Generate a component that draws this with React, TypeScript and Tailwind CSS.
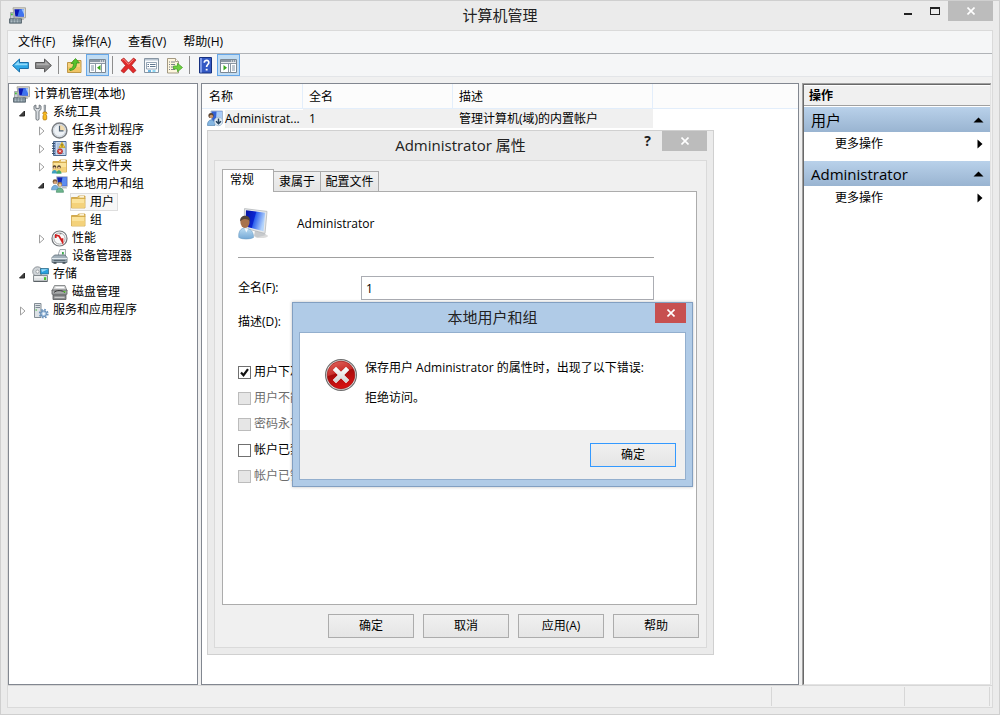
import type { ReactNode } from "react";

/* ---------- icons ---------- */

function ComputerIcon({ size = 17 }: { size?: number }) {
  return (
    <svg width={size} height={size} viewBox="0 0 17 17" aria-hidden="true" className="shrink-0">
      <path d="M4 .8h12.500v10H5.500z" fill="#d9d8cf" stroke="#a3a299" strokeWidth=".9" />
      <path d="M5.400 2.200h9.600v7.200H6.400z" fill="#0a18b4" />
      <path d="M10.500 2.200H15v7.200H8.500z" fill="#3f73ee" />
      <path d="M12.500 2.200H15v5z" fill="#9dc4fb" />
      <path d="M1.500 5.500h3.300v6.500H1.500z" fill="#c9ced3" stroke="#8a9197" strokeWidth=".7" />
      <rect x="2" y="6.500" width="1.800" height="1.800" fill="#4cc13c" />
      <path d="M9 10.800h5.500l.5 2.200h-4z" fill="#bcbcb4" />
      <path d="M.5 11.800h12v4.400H.5z" fill="#6b7c86" stroke="#44535c" strokeWidth=".7" />
      <path d="M1.500 13h10M1.500 14.800h10" stroke="#d5e0e6" strokeWidth=".9" strokeDasharray="2 1" />
    </svg>
  );
}

function ToolsIcon() {
  return (
    <svg width="17" height="17" viewBox="0 0 17 17" aria-hidden="true" className="shrink-0">
      <path d="M2 2v3.500L4 7.200V15c0 1.600 3 1.600 3 0V7.200l2-1.700V2L7.200 1v3.400H3.900V1z" fill="#d8dce0" stroke="#646b72" strokeWidth=".9" />
      <path d="M12 1.200h1.600l-.3 7h-1z" fill="#b9bfc5" stroke="#737a80" strokeWidth=".7" />
      <path d="M11.400 8h2.900l.6 1.500-1 1.200.8 1.200v3.300c0 1-3.700 1-3.700 0v-3.300l.8-1.200-1-1.200z" fill="#f9bd22" stroke="#b57a0c" strokeWidth=".8" />
    </svg>
  );
}

function ClockIcon() {
  return (
    <svg width="17" height="17" viewBox="0 0 17 17" aria-hidden="true" className="shrink-0">
      <circle cx="8.500" cy="8.500" r="7.400" fill="#eef2f6" stroke="#7b7f84" strokeWidth="1.500" />
      <path d="M8.500 8.500V2.600A6 6 0 0 1 14.400 8.500z" fill="#f3dcae" />
      <circle cx="8.500" cy="8.500" r="5.900" fill="none" stroke="#c3ccd6" strokeWidth=".8" />
      <path d="M8.500 3.800v5h4" fill="none" stroke="#4f6274" strokeWidth="1.200" />
    </svg>
  );
}

function EventIcon() {
  return (
    <svg width="17" height="17" viewBox="0 0 17 17" aria-hidden="true" className="shrink-0">
      <path d="M2.500 1.500h12.500v14H2.500z" fill="#8aa5cd" stroke="#4c6a92" />
      <path d="M5 2h9.500v13H5z" fill="#c9d9ee" />
      <path d="M6 4h3M6 6h2M6 8h2M6 13.500h7" stroke="#8ea9cc" />
      <path d="M1 3.500h3M1 6h3M1 8.500h3M1 11h3M1 13.500h3" stroke="#39506d" strokeWidth="1.100" />
      <path d="m11 2.200 3 5.400H8z" fill="#ffd42a" stroke="#b58900" strokeWidth=".6" />
      <path d="M11 4v1.900M11 6.300v.8" stroke="#333" strokeWidth=".9" />
      <circle cx="9" cy="11.300" r="2.600" fill="#d93a35" stroke="#8e1713" strokeWidth=".5" />
      <path d="m8 10.300 2 2m0-2-2 2" stroke="#fff" strokeWidth=".9" />
    </svg>
  );
}

function FolderShape() {
  return (
    <>
      <path d="M1.500 3.500h6l1-1.500h6.500v3H1.500z" fill="#e9c76a" stroke="#c79a37" strokeWidth=".8" />
      <path d="M9.500 2.800h4.500" stroke="#fff" strokeWidth="1.200" />
      <path d="M1.500 4.500h13.500v9.500H1.500z" fill="#fbe39b" stroke="#d0a648" strokeWidth=".8" />
      <path d="M2 9h12.500v4.600H2z" fill="#f4d27b" />
    </>
  );
}

function FolderIcon() {
  return (
    <svg width="16" height="16" viewBox="0 0 16 16" aria-hidden="true" className="shrink-0">
      <FolderShape />
    </svg>
  );
}

function SharedIcon() {
  return (
    <svg width="17" height="17" viewBox="0 0 17 17" aria-hidden="true" className="shrink-0">
      <g transform="translate(.5 0)">
        <FolderShape />
      </g>
      <circle cx="3.500" cy="9" r="1.800" fill="#4a3a2a" />
      <circle cx="3.500" cy="9.900" r="1.100" fill="#eec49a" />
      <path d="M.8 15.500c0-4.800 5.400-4.800 5.400 0z" fill="#3d9fc0" />
      <circle cx="8" cy="9" r="1.800" fill="#4a3a2a" />
      <circle cx="8" cy="9.900" r="1.100" fill="#eec49a" />
      <path d="M5.500 15.800c0-4.800 5-4.800 5 0z" fill="#43a970" />
    </svg>
  );
}

function UsersIcon() {
  return (
    <svg width="17" height="17" viewBox="0 0 17 17" aria-hidden="true" className="shrink-0">
      <path d="M5.500 .8h10.800v9.500H7z" fill="#1224b0" stroke="#b9bfc9" strokeWidth="1" />
      <path d="M11.500 1.300h4.300v8.500H10z" fill="#5c8cf0" />
      <path d="M11 10.800h4.500l.5 1.800h-5z" fill="#b9bdc2" />
      <circle cx="4" cy="5.700" r="2.400" fill="#7b5a3b" />
      <circle cx="4.200" cy="6.600" r="1.600" fill="#d8a67a" />
      <path d="M.5 13.800c0-6 7-6 7 0z" fill="#79b0dd" stroke="#4c83b4" strokeWidth=".6" />
      <circle cx="8.800" cy="8.300" r="2.300" fill="#a37b3e" />
      <circle cx="9" cy="9.100" r="1.500" fill="#f0cba0" />
      <path d="M5.300 16.300c0-6 7.200-6 7.200 0z" fill="#6db58d" stroke="#3d8560" strokeWidth=".6" />
    </svg>
  );
}

function PerfIcon() {
  return (
    <svg width="17" height="17" viewBox="0 0 17 17" aria-hidden="true" className="shrink-0">
      <circle cx="8.500" cy="8.500" r="7.500" fill="#fff" stroke="#74787c" strokeWidth="1.200" />
      <circle cx="8.500" cy="8.500" r="5.600" fill="#fafafa" stroke="#9b9fa2" strokeWidth=".9" />
      <path d="M4.800 8V5.200l3.200.8 3.500 6V8.200" fill="none" stroke="#d21f1f" strokeWidth="1.700" />
      <path d="M8.500 3.800h2" stroke="#555" strokeWidth=".8" />
    </svg>
  );
}

function DeviceIcon() {
  return (
    <svg width="17" height="17" viewBox="0 0 17 17" aria-hidden="true" className="shrink-0">
      <path d="M7.500 5.500 9 1.500h5.500V9h-7z" fill="#f4f6f8" stroke="#8b959d" strokeWidth=".8" />
      <path d="M11 4h1.800v2.500H11z" fill="#3bab4b" />
      <path d="M1 9.500 3.500 7h10.500l2 2.500v5H1z" fill="#a3b1bb" stroke="#5f6f7a" strokeWidth=".8" />
      <path d="M1 10.500h15" stroke="#e2e9ee" />
      <path d="M2.500 12.500h12" stroke="#586872" strokeWidth="1.400" />
      <path d="M2.500 15h3M11.500 15h3" stroke="#39444b" strokeWidth="1.400" />
    </svg>
  );
}

function StorageIcon() {
  return (
    <svg width="17" height="17" viewBox="0 0 17 17" aria-hidden="true" className="shrink-0">
      <circle cx="5.500" cy="5.600" r="4.800" fill="#cfd4d8" stroke="#7c8388" strokeWidth=".8" />
      <circle cx="5.500" cy="5.600" r="1.600" fill="#f8f8f8" stroke="#8f959a" strokeWidth=".8" />
      <path d="M8.500 2.500h8v5.500h-8z" fill="#29a0de" stroke="#22617f" strokeWidth=".7" />
      <path d="M9.200 3.200h6.600L10 6z" fill="#9bdcfa" />
      <path d="M1.500 9.500h14v5.600h-14z" fill="#e0e3e5" stroke="#6f767b" strokeWidth=".8" />
      <path d="M2.500 11h8.500" stroke="#fff" />
      <path d="M12 11.200h2.200V14H12z" fill="#49c22e" />
      <path d="M1.500 15.500h14" stroke="#5b6267" />
    </svg>
  );
}

function DiskIcon() {
  return (
    <svg width="17" height="17" viewBox="0 0 17 17" aria-hidden="true" className="shrink-0">
      <path d="M3.500 1.500h10.500l2 5.500H1z" fill="#d4d5d6" stroke="#75787a" strokeWidth=".8" />
      <path d="M4.500 3.500h8.500" stroke="#fff" strokeWidth="1.200" />
      <path d="M1 6h15v4.300H1z" fill="#a7a9aa" stroke="#56595b" strokeWidth=".8" />
      <path d="M3 8.500c2-2.500 8-2.500 11 0" fill="none" stroke="#333" />
      <path d="M12.500 7h2v1.400h-2z" fill="#57cf30" />
      <path d="M2 11h13v4.500H2z" fill="#8a8c8e" stroke="#56595b" strokeWidth=".8" />
      <path d="M3.500 13.300h10" stroke="#d8d8d8" />
    </svg>
  );
}

function ServicesIcon() {
  return (
    <svg width="17" height="17" viewBox="0 0 17 17" aria-hidden="true" className="shrink-0">
      <path d="M2.500 1.500h6.500v14H2.500z" fill="#dde2e6" stroke="#77818a" strokeWidth=".9" />
      <path d="M3.500 3.500h4.500M3.500 5.500h4.500" stroke="#7f8b95" />
      <path d="M3.500 8h1.500" stroke="#3cb52c" strokeWidth="1.200" />
      <circle cx="11.700" cy="11.700" r="4" fill="none" stroke="#6b93bd" strokeWidth="1.800" strokeDasharray="1.700 1.440" />
      <circle cx="11.700" cy="11.700" r="2.900" fill="#a9c6e3" stroke="#5f88b3" />
      <circle cx="11.700" cy="11.700" r="1.200" fill="#f5f8fb" />
    </svg>
  );
}

function UserMonitorIcon() {
  return (
    <svg width="32" height="32" viewBox="0 0 32 32" aria-hidden="true" className="shrink-0">
      <defs>
        <linearGradient id="screenFill" x1="0" y1="0" x2="1" y2="0.300">
          <stop offset="0" stopColor="#0612a0" />
          <stop offset=".5" stopColor="#0b25d2" />
          <stop offset=".55" stopColor="#2f62ee" />
          <stop offset="1" stopColor="#b4d4fb" />
        </linearGradient>
        <linearGradient id="shirtFill" x1="0" y1="0" x2="0" y2="1">
          <stop offset="0" stopColor="#bcdcf2" />
          <stop offset="1" stopColor="#74a9d6" />
        </linearGradient>
      </defs>
      <ellipse cx="23" cy="28" rx="7" ry="2" fill="#dcdcdc" />
      <path d="M17 22.500 25 24l3 3-9 2.500-3-2z" fill="#c6c9cc" />
      <path d="m6.500.6 22.500 2.800L27 25.500 6 20z" fill="#e6e8ea" stroke="#b4b7ba" strokeWidth=".8" />
      <path d="m8 2.200 19.200 2.500-1.700 18.500L7.500 18.500z" fill="url(#screenFill)" />
      <path d="M.8 29.500C.2 23 3 20.500 6 20c4 0 9.800 1.500 9.500 9.500-3.500 2-11.200 2-14.700 0z" fill="url(#shirtFill)" stroke="#6f9dc4" strokeWidth=".6" />
      <path d="m6.300 20 2 4.500 2-4z" fill="#f3f8fc" />
      <ellipse cx="7" cy="14" rx="4.600" ry="6" fill="#a8734c" />
      <path d="M2.200 13.500C1 6.500 12.500 5.500 12 13c-1.500-1.500-3.500-2.200-5.500-2-1.800.3-2.800 1.200-4.300 2.500z" fill="#54463a" />
    </svg>
  );
}

function UserDisabledIcon() {
  return (
    <svg width="17" height="17" viewBox="0 0 17 17" aria-hidden="true" className="shrink-0">
      <path d="M4 1h11.500v12H5z" fill="#3461d4" stroke="#a4b6cf" />
      <path d="M9.500 1.500H15v9.500H9z" fill="#a9cbf7" />
      <circle cx="4" cy="5.500" r="2.600" fill="#5a4332" />
      <circle cx="4.300" cy="6.500" r="1.800" fill="#c9966b" />
      <path d="M.5 15.500c-.5-7.500 8-7.500 7.500 0z" fill="#84b6e2" stroke="#5788b5" strokeWidth=".7" />
      <circle cx="11.500" cy="11.500" r="4.200" fill="#e2edf6" stroke="#9fb9d0" strokeWidth=".8" />
      <path d="M11.500 8.500v5M9 11.300l2.500 2.500 2.500-2.500" fill="none" stroke="#24425f" strokeWidth="1.500" />
    </svg>
  );
}

function ArrowIcon({ direction }: { direction: "left" | "right" }) {
  const left = direction === "left";
  return (
    <svg width="17" height="17" viewBox="0 0 17 17" aria-hidden="true">
      <g transform={left ? undefined : "translate(17 0) scale(-1 1)"}>
        <path d="M.6 8.500 7.500 2v3.500h8.900v6H7.500V15z" fill={left ? "#2fa7e6" : "#868686"} stroke={left ? "#1a6fa9" : "#5a5a5a"} strokeLinejoin="round" />
        <path d="M2.200 8.200 6.800 4v2.500h8.600v1.700z" fill={left ? "#8fdafa" : "#adadad"} />
      </g>
    </svg>
  );
}

function UpFolderIcon() {
  return (
    <svg width="17" height="17" viewBox="0 0 17 17" aria-hidden="true">
      <path d="M1.500 5.500h5l1-2h7.500v12H1.500z" fill="#f6d27a" stroke="#b98d3a" strokeWidth=".9" />
      <path d="M2 10h12.500v5H2z" fill="#efc465" />
      <path d="M3.500 12c3-.5 4-2.500 4-5.500H5L9.500 1.500l4 4.500h-3c0 4.500-2 7-6.500 7.500z" fill="#57c32c" stroke="#2f8a15" strokeWidth=".7" />
    </svg>
  );
}

function PaneIcon({ side }: { side: "left" | "right" }) {
  return (
    <svg width="17" height="15" viewBox="0 0 17 15" aria-hidden="true">
      <path d="M.5 1.500h16v13H.5z" fill="#fff" stroke="#7b8792" />
      <path d="M1 2h15v2.200H1z" fill="#8b98a4" />
      <path d="M11 3h1M13 3h1M15 3h1" stroke="#fff" />
      <path d="M1 5.500h15" stroke="#8b98a4" />
      {side === "left" ? (
        <>
          <path d="M6.500 5v9.500M12.500 5v9.500" stroke="#8b98a4" />
          <path d="M2 8h3M2 10h3M2 12h3" stroke="#8093a4" />
          <path d="M11.500 7v5.500L8 9.800z" fill="#38a81d" />
        </>
      ) : (
        <>
          <path d="M8.500 5v9.500M10.500 5v9.500" stroke="#8b98a4" />
          <path d="M12 8h3M12 10h3M12 12h3" stroke="#8093a4" />
          <path d="M3.500 7v5.500L7 9.800z" fill="#38a81d" />
        </>
      )}
    </svg>
  );
}

function DeleteIcon() {
  return (
    <svg width="17" height="17" viewBox="0 0 17 17" aria-hidden="true">
      <path d="m1 3 2.800-2 4.700 5L13.500 1 16 3l-4.500 5.300L16 13.500 13.200 16 8.500 11 3.800 16 1 13.800 5.600 8.500z" fill="#e22b2b" stroke="#a81616" strokeWidth=".7" strokeLinejoin="round" />
      <path d="m2.500 3 1.200-.8L8.500 7.300 13.500 2.300" fill="none" stroke="#f68f87" />
    </svg>
  );
}

function PropertiesIcon() {
  return (
    <svg width="15" height="17" viewBox="0 0 15 17" aria-hidden="true">
      <path d="M.5 1.500h14v14H.5z" fill="#fbfcfd" stroke="#8795a3" />
      <path d="M1 2h13v1.500H1z" fill="#b9c6d2" />
      <path d="M2.500 5.500h10v6.500h-10z" fill="#fff" stroke="#7c90a5" strokeWidth=".8" />
      <path d="M3.500 7.500h1.500M6 7.500h5.500M3.500 9.500h1.500M6 9.500h5.500" stroke="#60778f" />
      <path d="M4 14h3" stroke="#1c8fd6" strokeWidth="1.300" />
      <path d="M8.500 14h3" stroke="#53c3ee" strokeWidth="1.300" />
    </svg>
  );
}

function ExportIcon() {
  return (
    <svg width="17" height="17" viewBox="0 0 17 17" aria-hidden="true">
      <path d="M1.500 1.500h8l3 3v11.500h-11z" fill="#fdf6de" stroke="#998f76" strokeWidth=".9" />
      <path d="M9.500 1.500v3h3" fill="#fff" stroke="#998f76" strokeWidth=".8" />
      <path d="M3 5h1M5 5h4M3 7.500h1M5 7.500h4M3 10h1M5 10h2M3 12.500h1M5 12.500h4" stroke="#6d7580" strokeWidth=".9" />
      <path d="M7.500 9h4V6.300L16.500 10.500 11.500 14.700V12h-4z" fill="#6fd142" stroke="#4aa52c" strokeWidth=".8" />
    </svg>
  );
}

function HelpIcon() {
  return (
    <svg width="13" height="17" viewBox="0 0 13 17" aria-hidden="true">
      <path d="M.5.5h12v15.500H.5z" fill="#3459c4" stroke="#16307f" />
      <path d="M1 1h2v14.500H1z" fill="#7e9ae6" />
      <path d="M5.300 5.700c0-3.400 5-3 4.500.1-.3 1.700-2.200 2-2.200 4.200" fill="none" stroke="#fff" strokeWidth="1.700" />
      <path d="M6.700 11.800h1.900v1.700H6.700z" fill="#fff" />
    </svg>
  );
}

function ErrorIcon() {
  return (
    <svg width="32" height="32" viewBox="0 0 32 32" aria-hidden="true" className="shrink-0">
      <defs>
        <linearGradient id="errorFill" x1="0" y1="0" x2="0.300" y2="1">
          <stop offset="0" stopColor="#e2675f" />
          <stop offset=".48" stopColor="#c9302c" />
          <stop offset=".52" stopColor="#a80c0c" />
          <stop offset="1" stopColor="#d41212" />
        </linearGradient>
        <linearGradient id="crossFill" x1="0" y1="0" x2="0" y2="1">
          <stop offset="0" stopColor="#ffffff" />
          <stop offset="1" stopColor="#cfcfcf" />
        </linearGradient>
      </defs>
      <circle cx="16" cy="16" r="15.400" fill="#f2f2f2" stroke="#6d6d6d" strokeWidth="1.200" />
      <circle cx="16" cy="16" r="13.900" fill="url(#errorFill)" stroke="#8e1010" strokeWidth=".6" />
      <path d="m8 11 3-3 5 5 5-5 3 3-5 5 5 5-3 3-5-5-5 5-3-3 5-5z" fill="url(#crossFill)" stroke="#ececec" strokeWidth=".6" strokeLinejoin="round" />
    </svg>
  );
}

function CloseGlyph() {
  return (
    <svg width="8" height="8" viewBox="0 0 8 8" aria-hidden="true">
      <path d="m.5.5 7 7m0-7-7 7" stroke="#fff" strokeWidth="1.600" />
    </svg>
  );
}

/* ---------- navigation tree ---------- */

type NodeProps = {
  icon: ReactNode;
  label: string;
  state?: "open" | "closed";
  selected?: boolean;
  children?: ReactNode;
};

function Twisty({ state }: { state?: "open" | "closed" }) {
  return (
    <svg width="19" height="17" viewBox="0 0 19 17" aria-hidden="true" className="shrink-0">
      {state === "open" && <path d="M11.500 7v5h-5z" fill="#404040" stroke="#262626" />}
      {state === "closed" && <path d="M7.500 5v8l4.500-4z" fill="#fff" stroke="#a0a0a0" />}
    </svg>
  );
}

function TreeNode({ icon, label, state, selected, children }: NodeProps) {
  return (
    <li role="treeitem" aria-expanded={state ? state === "open" : undefined} aria-selected={!!selected}>
      <div className="flex h-[18px] items-center">
        <Twisty state={state} />
        <span
          className={
            selected
              ? "flex h-[18px] items-center gap-1 bg-[#f7f7f7] pr-1 outline outline-1 -outline-offset-1 outline-[#dedede]"
              : "flex h-[18px] items-center gap-1 pr-1"
          }
        >
          {icon}
          <span className="whitespace-nowrap">{label}</span>
        </span>
      </div>
      {children && (
        <ul role="group" className="pl-[19px]">
          {children}
        </ul>
      )}
    </li>
  );
}

function NavigationTree() {
  return (
    <nav className="w-[190px] shrink-0 overflow-hidden border border-[#828790] bg-white pt-px pl-1" aria-label="控制台树">
      <div className="flex h-[18px] items-center gap-1">
        <ComputerIcon />
        <span>计算机管理(本地)</span>
      </div>
      <ul role="tree">
        <TreeNode icon={<ToolsIcon />} label="系统工具" state="open">
          <TreeNode icon={<ClockIcon />} label="任务计划程序" state="closed" />
          <TreeNode icon={<EventIcon />} label="事件查看器" state="closed" />
          <TreeNode icon={<SharedIcon />} label="共享文件夹" state="closed" />
          <TreeNode icon={<UsersIcon />} label="本地用户和组" state="open">
            <TreeNode icon={<FolderIcon />} label="用户" selected />
            <TreeNode icon={<FolderIcon />} label="组" />
          </TreeNode>
          <TreeNode icon={<PerfIcon />} label="性能" state="closed" />
          <TreeNode icon={<DeviceIcon />} label="设备管理器" />
        </TreeNode>
        <TreeNode icon={<StorageIcon />} label="存储" state="open">
          <TreeNode icon={<DiskIcon />} label="磁盘管理" />
        </TreeNode>
        <TreeNode icon={<ServicesIcon />} label="服务和应用程序" state="closed" />
      </ul>
    </nav>
  );
}

/* ---------- menu and tool bars ---------- */

const menus = ["文件(F)", "操作(A)", "查看(V)", "帮助(H)"];

function ToolButton({ label, active, children }: { label: string; active?: boolean; children: ReactNode }) {
  return (
    <button
      type="button"
      aria-label={label}
      aria-pressed={active}
      className={
        active
          ? "flex h-[22px] w-[23px] items-center justify-center border border-[#66a7e8] bg-[#c0dcf3]"
          : "flex h-[22px] w-[23px] items-center justify-center"
      }
    >
      {children}
    </button>
  );
}

function Separator() {
  return (
    <span className="flex w-2 pl-[3px]">
      <span className="h-[18px] w-px bg-[#8d8d8d]" />
    </span>
  );
}

function ToolBar() {
  return (
    <div role="toolbar" className="flex h-[23px] items-center border-b border-[#e3e5e8] bg-[#f5f6f7] pl-px">
      <ToolButton label="后退"><ArrowIcon direction="left" /></ToolButton>
      <ToolButton label="前进"><ArrowIcon direction="right" /></ToolButton>
      <Separator />
      <ToolButton label="向上"><UpFolderIcon /></ToolButton>
      <ToolButton label="显示控制台树" active><PaneIcon side="left" /></ToolButton>
      <Separator />
      <ToolButton label="删除"><DeleteIcon /></ToolButton>
      <ToolButton label="属性"><PropertiesIcon /></ToolButton>
      <ToolButton label="导出列表"><ExportIcon /></ToolButton>
      <Separator />
      <ToolButton label="帮助"><HelpIcon /></ToolButton>
      <ToolButton label="显示操作窗格" active><PaneIcon side="right" /></ToolButton>
    </div>
  );
}

/* ---------- user list ---------- */

function UserList() {
  return (
    <section className="min-w-0 flex-1 overflow-hidden border border-[#828790] bg-white">
      <table className="w-full table-fixed border-separate border-spacing-0 text-left">
        <colgroup>
          <col className="w-[101px]" />
          <col className="w-[150px]" />
          <col className="w-[200px]" />
          <col />
        </colgroup>
        <thead className="bg-[#fcfcfc]">
          <tr className="h-[25px]">
            <th className="border-r border-b border-[#e3eefb] pt-px pl-[7px] font-normal">名称</th>
            <th className="border-r border-b border-[#e3eefb] pt-px pl-[6px] font-normal">全名</th>
            <th className="border-r border-b border-[#e3eefb] pt-px pl-[6px] font-normal">描述</th>
            <td className="border-b border-[#e3eefb]" />
          </tr>
        </thead>
        <tbody>
          <tr className="h-[19px]">
            <td className="pl-[5px]">
              <span className="flex items-center gap-px whitespace-nowrap">
                <UserDisabledIcon />
                <span className="flex-1 bg-[#f0f0f0]">Administrat...</span>
              </span>
            </td>
            <td className="bg-[#f0f0f0] pl-[6px]">1</td>
            <td className="bg-[#f0f0f0] pl-[6px]">管理计算机(域)的内置帐户</td>
            <td />
          </tr>
        </tbody>
      </table>
    </section>
  );
}

/* ---------- actions pane ---------- */

function ActionGroup({ title }: { title: string }) {
  return (
    <section className="pb-[5px]">
      <button type="button" className="flex h-[25px] w-full items-center justify-between bg-linear-to-b from-[#b9d1ea] to-[#99b4d1] pr-[6px] pl-[7px] text-[15px]">
        {title}
        <svg width="11" height="6" viewBox="0 0 11 6" aria-hidden="true">
          <path d="M5.500.5 10.500 5.500H.5z" />
        </svg>
      </button>
      <button type="button" className="flex h-6 w-full items-center justify-between pr-[7px] pl-[31px]">
        更多操作
        <svg width="6" height="10" viewBox="0 0 6 10" aria-hidden="true">
          <path d="M.5.500 5.500 5 .5 9.500z" />
        </svg>
      </button>
    </section>
  );
}

function ActionsPane() {
  return (
    <aside className="mr-px w-[189px] shrink-0 border-t border-l border-[#a0a0a0]">
      <div className="h-full border-t border-r border-b border-l border-t-[#696969] border-r-[#e3e3e3] border-b-[#e3e3e3] border-l-[#696969] bg-white">
        <h2 className="mt-px mb-px h-5 border-b border-[#a0a0a0] bg-[#f0f0f0] pl-[5px] leading-5 font-bold">操作</h2>
        <ActionGroup title="用户" />
        <ActionGroup title="Administrator" />
      </div>
    </aside>
  );
}

/* ---------- dialogs ---------- */

function DialogButton({ children, primary }: { children: ReactNode; primary?: boolean }) {
  return (
    <button
      type="button"
      className={
        primary
          ? "h-6 w-[86px] border border-[#3399ff] bg-linear-to-b from-[#f0f0f0] to-[#e5e5e5]"
          : "h-6 w-[86px] border border-[#acacac] bg-linear-to-b from-[#f0f0f0] to-[#e5e5e5]"
      }
    >
      {children}
    </button>
  );
}

const options = [
  { id: "must-change", label: "用户下次登录", checked: true, disabled: false },
  { id: "cannot-change", label: "用户不能更改", checked: false, disabled: true },
  { id: "never-expires", label: "密码永不过期", checked: false, disabled: true },
  { id: "account-disabled", label: "帐户已禁用", checked: false, disabled: false },
  { id: "account-locked", label: "帐户已锁定", checked: false, disabled: true },
];

function CheckOption({ id, label, checked, disabled }: (typeof options)[number]) {
  return (
    <div className="flex h-[26px] items-center gap-[3px]">
      <span className="grid size-[13px] place-items-center">
        <input
          id={id}
          type="checkbox"
          defaultChecked={checked}
          disabled={disabled}
          className="peer col-start-1 row-start-1 size-[13px] appearance-none border border-[#707070] bg-white disabled:border-[#bcbcbc] disabled:bg-[#e6e6e6]"
        />
        <svg width="9" height="9" viewBox="0 0 9 9" aria-hidden="true" className="pointer-events-none invisible col-start-1 row-start-1 peer-checked:visible">
          <path d="M1 4.500 3.500 7.200 8 1.200" fill="none" stroke="#111" strokeWidth="2.200" />
        </svg>
      </span>
      <label htmlFor={id} className={disabled ? "text-[#6d6d6d]" : "text-black"}>
        {label}
      </label>
    </div>
  );
}

function PropertiesDialog() {
  return (
    <section role="dialog" aria-labelledby="properties-title" className="absolute top-[129px] left-[206px] flex w-[507px] flex-col border border-[#d0d0d0] bg-[#ebebeb] px-[6px] pb-[6px]">
      <header className="grid h-[29px] grid-cols-[1fr_auto_1fr] items-start">
        <span />
        <h2 id="properties-title" className="text-[15px] leading-[29px] text-[#222]">Administrator 属性</h2>
        <div className="flex justify-end">
          <button type="button" aria-label="帮助" className="h-5 w-[29px] text-[14px] leading-5 font-bold text-[#222]">?</button>
          <button type="button" aria-label="关闭" className="flex h-5 w-[45px] items-center justify-center bg-[#bcbcbc]">
            <CloseGlyph />
          </button>
        </div>
      </header>
      <div className="border border-[#dadada] bg-[#f0f0f0] px-[7px] pt-2 pb-[9px]">
        <div role="tablist" className="flex items-end">
          <button type="button" role="tab" aria-selected="true" className="relative z-10 -mb-px h-[23px] w-[52px] border border-b-0 border-[#acacac] bg-white pr-3 pb-[2px]">常规</button>
          <button type="button" role="tab" aria-selected="false" className="h-5 w-[47px] border border-b-0 border-l-0 border-[#acacac] bg-linear-to-b from-[#f0f0f0] to-[#e5e5e5]">隶属于</button>
          <button type="button" role="tab" aria-selected="false" className="h-5 w-[58px] border border-b-0 border-l-0 border-[#acacac] bg-linear-to-b from-[#f0f0f0] to-[#e5e5e5]">配置文件</button>
        </div>
        <div role="tabpanel" className="mr-[2px] h-[414px] border border-[#acacac] bg-white pt-3 pr-[42px] pl-[15px]">
          <div className="flex items-center gap-[27px] border-b border-[#a0a0a0] pt-[2px] pb-[15px]">
            <UserMonitorIcon />
            <span className="h-9 leading-9">Administrator</span>
          </div>
          <div className="mt-[18px] grid grid-cols-[123px_1fr] items-center gap-y-[10px]">
            <label htmlFor="full-name">全名(F):</label>
            <input id="full-name" defaultValue="1" className="h-6 w-full border border-[#abadb3] bg-white px-1" />
            <label htmlFor="description">描述(D):</label>
            <input id="description" className="h-6 w-full border border-[#abadb3] bg-white px-1" />
          </div>
          <div className="mt-[25px]">
            {options.map((option) => (
              <CheckOption key={option.id} {...option} />
            ))}
          </div>
        </div>
        <footer className="mt-[9px] flex justify-end gap-[9px]">
          <DialogButton>确定</DialogButton>
          <DialogButton>取消</DialogButton>
          <DialogButton>应用(A)</DialogButton>
          <DialogButton>帮助</DialogButton>
        </footer>
      </div>
    </section>
  );
}

function ErrorDialog() {
  return (
    <section role="alertdialog" aria-labelledby="error-title" className="absolute top-[301px] left-[291px] flex w-[401px] flex-col border border-[#829fc1] bg-[#b0cbe7] px-[6px] pb-[6px] shadow-[0_0_3px_rgba(0,0,0,0.25)]">
      <header className="grid h-[29px] grid-cols-[1fr_auto_1fr] items-start">
        <span />
        <h2 id="error-title" className="text-[15px] leading-[29px] text-[#222]">本地用户和组</h2>
        <button type="button" aria-label="关闭" className="flex h-5 w-[31px] items-center justify-center justify-self-end bg-[#c75050]">
          <CloseGlyph />
        </button>
      </header>
      <div className="border border-[#93afce] bg-white">
        <div className="flex gap-2 px-[25px] pt-[26px] pb-[23px]">
          <ErrorIcon />
          <div className="flex flex-col gap-3">
            <p className="leading-[18px] whitespace-nowrap">保存用户 Administrator 的属性时，出现了以下错误:</p>
            <p className="leading-[18px]">拒绝访问。</p>
          </div>
        </div>
        <footer className="flex justify-end bg-[#f0f0f0] pt-[13px] pr-[9px] pb-3">
          <DialogButton primary>确定</DialogButton>
        </footer>
      </div>
    </section>
  );
}

/* ---------- main window ---------- */

function WindowTitle() {
  return (
    <header className="grid h-[29px] shrink-0 grid-cols-[1fr_auto_1fr] items-start">
      <span className="pt-[6px] pl-[2px]">
        <ComputerIcon />
      </span>
      <h1 className="text-[15px] leading-[29px] text-[#222]">计算机管理</h1>
      <div className="flex justify-end">
        <button type="button" aria-label="最小化" className="flex h-5 w-[27px] items-center justify-center">
          <svg width="8" height="8" viewBox="0 0 8 8" aria-hidden="true"><path d="M0 6h8v2H0z" fill="#222" /></svg>
        </button>
        <button type="button" aria-label="最大化" className="flex h-5 w-[27px] items-center justify-center">
          <svg width="10" height="8" viewBox="0 0 10 8" aria-hidden="true"><path d="M0 0h10v8H0zM1 2v5h8V2z" fill="#222" fillRule="evenodd" /></svg>
        </button>
        <button type="button" aria-label="关闭" className="flex h-5 w-[45px] items-center justify-center bg-[#bcbcbc]">
          <CloseGlyph />
        </button>
      </div>
    </header>
  );
}

export default function App() {
  return (
    <div className="relative flex min-h-screen flex-col border border-[#cfcfcf] bg-[#ebebeb] px-[6px] pb-[6px] font-['Open_Sans','Noto_Sans_CJK_SC',sans-serif] text-[12px] leading-[18px] text-black">
      <WindowTitle />
      <div className="flex flex-1 flex-col border border-[#dadada] bg-[#f0f0f0]">
        <div role="menubar" className="flex h-[23px] items-center gap-[17px] border-b border-[#b0b3b7] bg-[#f5f6f7] pl-[10px]">
          {menus.map((menu) => (
            <button key={menu} type="button" role="menuitem">{menu}</button>
          ))}
        </div>
        <ToolBar />
        <main className="flex flex-1 gap-[3px] pt-[6px]">
          <NavigationTree />
          <UserList />
          <ActionsPane />
        </main>
        <footer className="flex h-[22px] justify-end border-t border-[#d7d7d7] pt-px pr-[2px] pb-px">
          <span className="w-[133px] border-l border-[#d7d7d7]" />
          <span className="w-[86px] border-x border-[#d7d7d7]" />
        </footer>
      </div>
      <PropertiesDialog />
      <ErrorDialog />
    </div>
  );
}
